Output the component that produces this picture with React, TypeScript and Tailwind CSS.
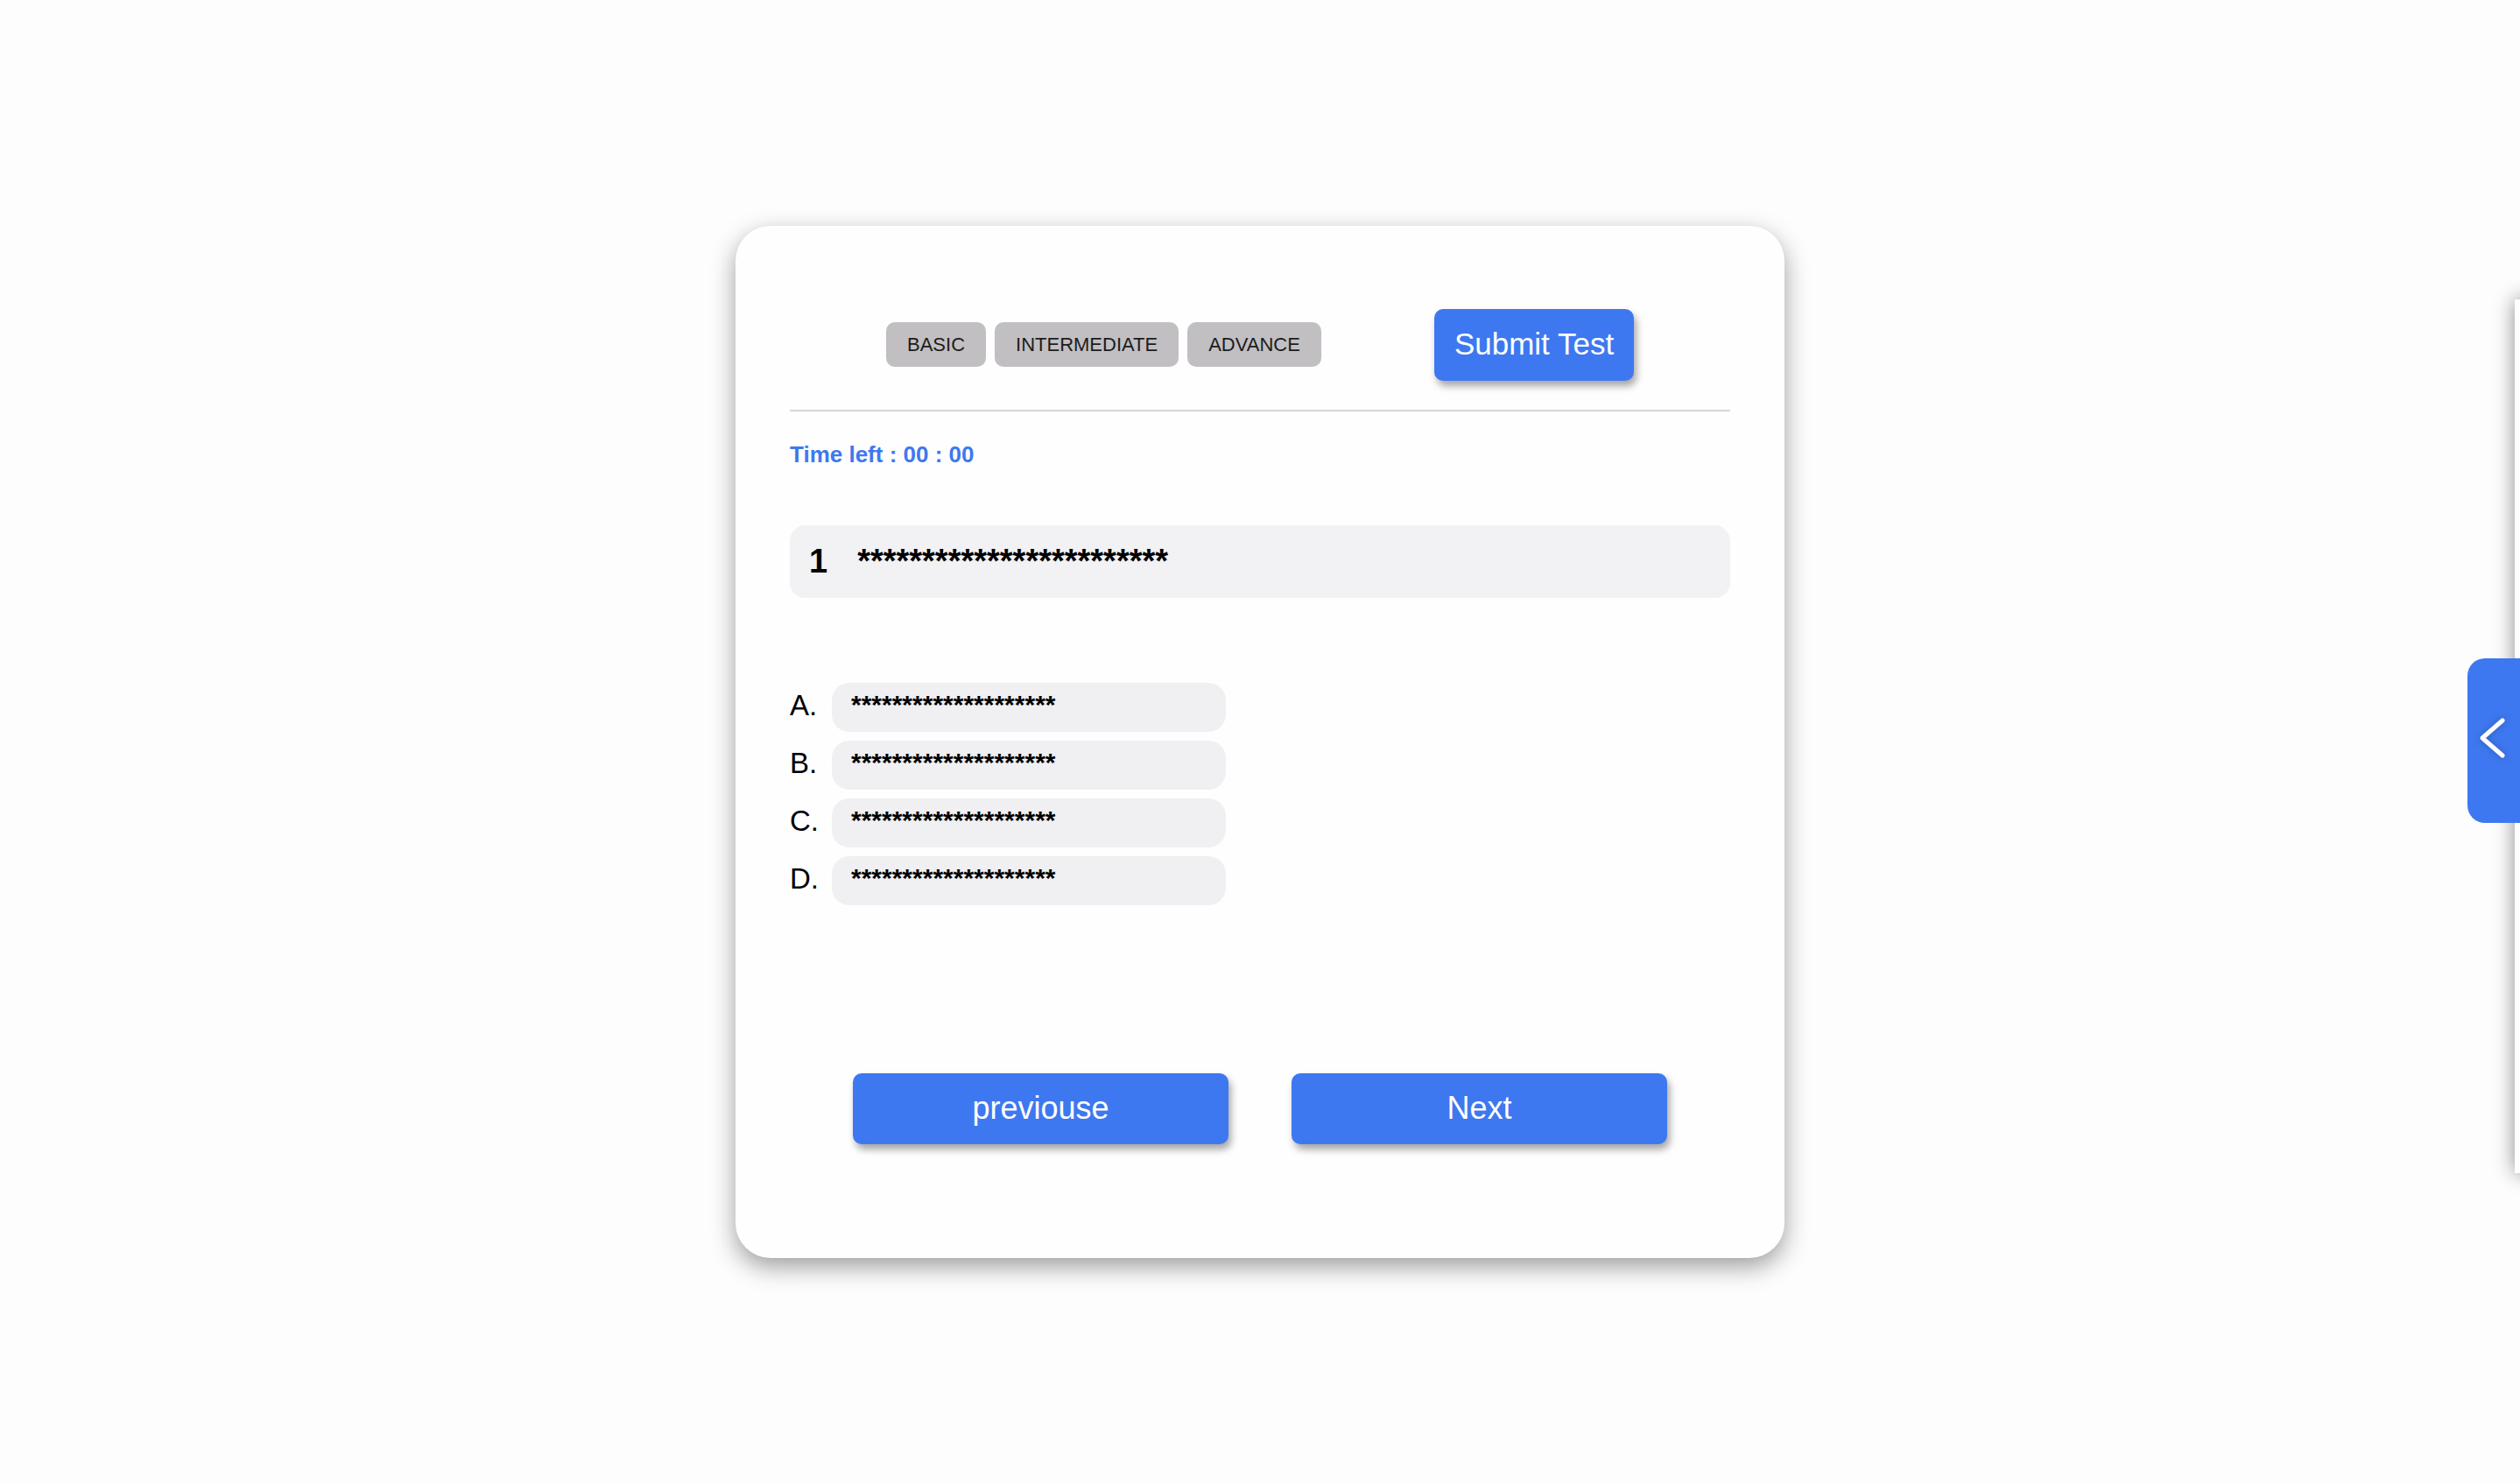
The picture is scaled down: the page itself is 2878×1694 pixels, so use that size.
import { useState } from 'react';

const levels = ['BASIC', 'INTERMEDIATE', 'ADVANCE'];
const options = ['A.', 'B.', 'C.', 'D.'];

export default function App() {
  const [level, setLevel] = useState('BASIC');
  const [answer, setAnswer] = useState<string | null>(null);

  return (
    <div className="relative h-screen w-full overflow-hidden bg-[#fefdfe] flex items-center justify-center font-['Liberation_Sans',Arial,sans-serif]">
      {/* Test card */}
      <div className="w-[1198px] h-[1179px] bg-[#fefefe] rounded-[40px] shadow-[0_10px_28px_rgba(0,0,0,0.38)] px-[62px] pt-[95px] flex flex-col">
        <div className="flex items-center justify-between px-[110px]">
          <div className="flex gap-[10px]">
            {levels.map((l) => (
              <button
                key={l}
                onClick={() => setLevel(l)}
                className={`h-[51px] px-6 rounded-[10px] text-[22px] text-[#1c1c1c] ${
                  level === l ? 'bg-[#c1bfc2]' : 'bg-[#c1bfc2]'
                }`}
              >
                {l}
              </button>
            ))}
          </div>
          <button className="h-[82px] w-[228px] rounded-[10px] bg-[#3e78f0] text-white text-[35px] shadow-[3px_6px_8px_rgba(0,0,0,0.35)]">
            Submit Test
          </button>
        </div>

        <div className="mt-[33px] h-[2px] bg-[#d6d5d8]" />

        <div className="mt-[34px] text-[26px] leading-[30px] font-bold text-[#3e78f0]">
          Time left : 00 : 00
        </div>

        {/* Question */}
        <div className="mt-[66px] h-[83px] rounded-[18px] bg-[#f2f1f4] px-[22px] flex items-center gap-[34px] text-[38px] font-bold text-black">
          <span>1</span>
          <span>************************</span>
        </div>

        {/* Options */}
        <div className="mt-[97px] flex flex-col gap-[10px]">
          {options.map((o) => (
            <div key={o} className="flex items-center">
              <span className="w-[48px] -mt-[3px] text-[33px] text-black">{o}</span>
              <button
                onClick={() => setAnswer(o)}
                className={`w-[450px] h-[56px] rounded-[20px] px-[22px] pt-[8px] text-left text-[30px] leading-[34px] font-bold text-black flex items-start ${
                  answer === o ? 'bg-[#e6e5ea]' : 'bg-[#f0eff2]'
                }`}
              >
                ********************
              </button>
            </div>
          ))}
        </div>

        <div className="mt-[192px] flex justify-center gap-[72px]">
          <button className="w-[429px] h-[81px] rounded-[10px] bg-[#3e78f0] text-white text-[36px] shadow-[3px_6px_8px_rgba(0,0,0,0.35)]">
            previouse
          </button>
          <button className="w-[429px] h-[81px] rounded-[10px] bg-[#3e78f0] text-white text-[36px] shadow-[3px_6px_8px_rgba(0,0,0,0.35)]">
            Next
          </button>
        </div>
      </div>

      {/* Side drawer, mostly off screen */}
      <div className="absolute left-[2872px] top-[342px] w-[400px] h-[998px] bg-white shadow-[0_0_22px_rgba(0,0,0,0.45)]" />
      <button className="absolute left-[2818px] top-[752px] w-[100px] h-[188px] rounded-l-[20px] bg-[#3e78f0] flex items-center pl-[14px]">
        <svg
          width="30"
          height="50"
          viewBox="0 0 30 50"
          className="-mt-[6px] drop-shadow-[0_0_4px_rgba(0,0,0,0.25)]"
        >
          <polyline
            points="26,5 3,25 26,45"
            fill="none"
            stroke="white"
            strokeWidth="5"
            strokeLinecap="round"
            strokeLinejoin="round"
          />
        </svg>
      </button>
    </div>
  );
}
